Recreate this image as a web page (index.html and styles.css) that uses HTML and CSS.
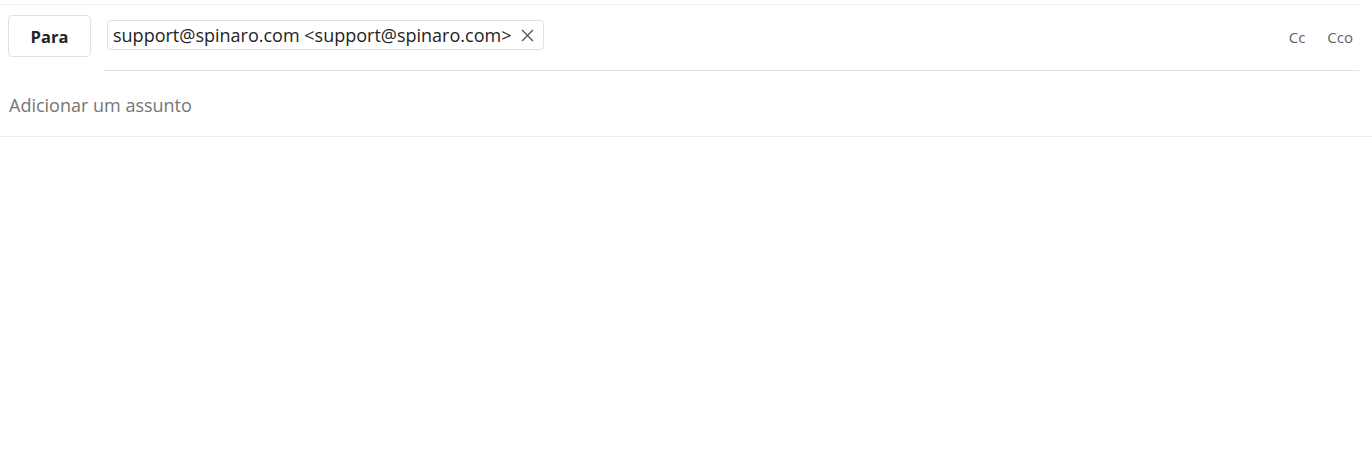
FILE: index.html
```
<!DOCTYPE html>
<html lang="pt">
<head>
<meta charset="utf-8">
<link rel="stylesheet" href="styles.css">
</head>
<body>
<div class="compose">
  <div class="to-row">
    <button class="para">Para</button>
    <div class="recipients">
      <div class="chips">
        <span class="chip">support@spinaro.com &lt;support@spinaro.com&gt;<svg class="x" viewBox="0 0 12 12" width="13" height="13"><path d="M1 1 L11 11 M11 1 L1 11" stroke="#555" stroke-width="1.2" fill="none"/></svg></span>
      </div>
      <div class="cc">
        <span>Cc</span>
        <span>Cco</span>
      </div>
    </div>
  </div>
  <div class="subject">Adicionar um assunto</div>
</div>
</body>
</html>
```
FILE: styles.css
```
html, body { margin: 0; padding: 0; background: #fff; }
body { font-family: "Open Sans", "Noto Sans", sans-serif; color: #242424; }
.compose { padding-top: 4px; }
.to-row {
  display: flex;
  align-items: flex-start;
  border-top: 1px solid #f0f0f0;
  margin-right: 13px;
  padding-top: 10px;
}
.para {
  margin-left: 8px;
  width: 83px;
  height: 42px;
  border: 1px solid #e1e1e1;
  border-radius: 4px;
  background: #fff;
  font-family: inherit;
  font-weight: 700;
  font-size: 16.5px;
  color: #242424;
  padding: 1px 0 0;
  flex: none;
}
.recipients {
  flex: 1;
  margin-left: 13px;
  height: 55px;
  border-bottom: 1px solid #e1e1e1;
  display: flex;
  justify-content: space-between;
  align-items: flex-start;
}
.chips { padding-top: 5px; padding-left: 3px; }
.chip {
  display: inline-flex;
  align-items: center;
  height: 28px;
  border: 1px solid #e1e1e1;
  border-radius: 4px;
  padding: 0 9px 0 5px;
  font-size: 18px;
  color: #242424;
  gap: 10px;
}
.cc {
  display: flex;
  gap: 22px;
  font-size: 15px;
  color: #616161;
  padding-top: 12px;
  padding-right: 6px;
}
.subject {
  font-size: 18px;
  color: #767676;
  padding: 0 9px;
  height: 65px;
  line-height: 68px;
  border-bottom: 1px solid #ececec;
}
```
